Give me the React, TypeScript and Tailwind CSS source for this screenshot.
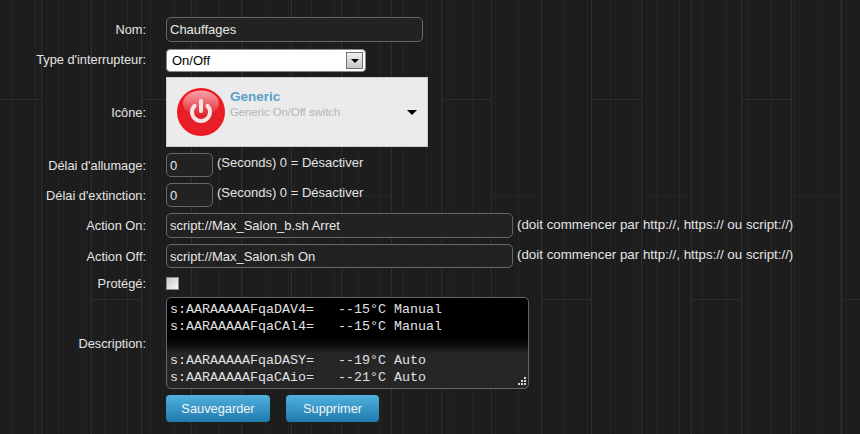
import React from "react";

const inputClass =
  "h-full bg-[#222222] border border-[#666666] rounded-[5px] px-[3px] text-[#e8e8e8] text-[13px] outline-none";

function Row({
  label,
  height,
  top,
  labelShift,
  children,
}: {
  label: string;
  height: string;
  top: string;
  labelShift: string;
  children: React.ReactNode;
}) {
  return (
    <div className={`flex items-center ${height} ${top}`}>
      <label className={`w-[146px] shrink-0 text-right text-[12.8px] text-[#e4e4e4] ${labelShift}`}>{label}</label>
      <div className="ml-[20px] flex items-center h-full">{children}</div>
    </div>
  );
}

function PowerIcon() {
  return (
    <svg width="48" height="48" viewBox="0 0 48 48" className="shrink-0">
      <defs>
        <radialGradient id="red" cx="50%" cy="50%" r="50%">
          <stop offset="0%" stopColor="#d8202a" />
          <stop offset="75%" stopColor="#e8202a" />
          <stop offset="100%" stopColor="#f0161e" />
        </radialGradient>
        <linearGradient id="shine" x1="0" y1="0" x2="0" y2="1">
          <stop offset="0%" stopColor="#ffffff" stopOpacity="0.6" />
          <stop offset="100%" stopColor="#ffffff" stopOpacity="0.03" />
        </linearGradient>
      </defs>
      <circle cx="24" cy="24" r="24" fill="url(#red)" />
      <ellipse cx="24" cy="15" rx="18" ry="12.5" fill="url(#shine)" />
      <path
        d="M17.5 17.8a9 9 0 1 0 13 0"
        fill="none"
        stroke="#f8e4e4"
        strokeWidth="4"
        strokeLinecap="round"
      />
      <path d="M24 13v10" fill="none" stroke="#f8e4e4" strokeWidth="4" strokeLinecap="round" />
    </svg>
  );
}

const hint = "(doit commencer par http://, https:// ou script://)";

export default function App() {
  return (
    <div className="w-[860px] h-[434px] overflow-hidden font-['Liberation_Sans',Arial,sans-serif] pt-[17px] [background:conic-gradient(at_50px_1px,transparent_270deg,#2b2b2b_270deg)_-9px_99px/150px_600px,conic-gradient(at_50px_1px,transparent_270deg,#262626_270deg)_41px_195px/150px_600px,conic-gradient(at_50px_1px,transparent_270deg,#2b2b2b_270deg)_91px_299px/150px_600px,linear-gradient(90deg,#2e2e2e_1px,transparent_1px)_41px_0/50px_100%,repeating-linear-gradient(90deg,transparent_0px,transparent_12px,#232323_12px,#232323_13px,transparent_13px,transparent_23px),repeating-linear-gradient(90deg,#1b1b1b_0px,#1b1b1b_1px,#202020_2px,#1d1d1d_3px,#1e1e1e_4px)]">
      {/* Nom */}
      <Row label="Nom:" height="h-[25px]" top="" labelShift="translate-y-0">
        <input readOnly value="Chauffages" className={`${inputClass} w-[257px]`} />
      </Row>

      {/* Type */}
      <Row label="Type d'interrupteur:" height="h-[23px]" top="mt-[7px]" labelShift="-translate-y-[1px]">
        <div className="w-[200px] h-full bg-white rounded-[4px] border border-[#888888] flex items-center justify-between pl-[5px] pr-[2px] text-[13px] text-black">
          <span>On/Off</span>
          <span className="w-[17px] h-[17px] bg-gradient-to-b from-[#f0f0f0] to-[#c8c8c8] border border-[#707070] flex items-center justify-center">
            <span className="w-0 h-0 border-l-[4px] border-r-[4px] border-t-[4px] border-l-transparent border-r-transparent border-t-black" />
          </span>
        </div>
      </Row>

      {/* Icône */}
      <Row label="Icône:" height="h-[70px]" top="mt-[5px]" labelShift="translate-y-[1px]">
        <div className="w-[262px] h-full bg-[#ebebeb] border border-[#cccccc] flex items-center pl-[10px] pr-[10px]">
          <PowerIcon />
          <div className="ml-[5px] flex-1 -translate-y-[8px]">
            <div className="text-[13.5px] leading-[15px] font-bold text-[#5a9fc8]">Generic</div>
            <div className="text-[11.3px] leading-[15px] text-[#b4b4b4] mt-[1px]">Generic On/Off switch</div>
          </div>
          <span className="w-0 h-0 border-l-[5px] border-r-[5px] border-t-[5px] border-l-transparent border-r-transparent border-t-black" />
        </div>
      </Row>

      {/* Délais */}
      <Row label="Délai d'allumage:" height="h-[24px]" top="mt-[6px]" labelShift="translate-y-[1px]">
        <input readOnly value="0" className={`${inputClass} w-[47px]`} />
        <span className="ml-[4px] text-[13px] text-[#e4e4e4] -translate-y-[2px]">(Seconds) 0 = Désactiver</span>
      </Row>
      <Row label="Délai d'extinction:" height="h-[24px]" top="mt-[6px]" labelShift="translate-y-[1px]">
        <input readOnly value="0" className={`${inputClass} w-[47px]`} />
        <span className="ml-[4px] text-[13px] text-[#e4e4e4] -translate-y-[2px]">(Seconds) 0 = Désactiver</span>
      </Row>

      {/* Actions */}
      <Row label="Action On:" height="h-[25px]" top="mt-[6px]" labelShift="translate-y-0">
        <input readOnly value="script://Max_Salon_b.sh Arret" className={`${inputClass} w-[347px]`} />
        <span className="ml-[4px] text-[13.33px] text-[#e4e4e4] -translate-y-[1px] whitespace-nowrap">{hint}</span>
      </Row>
      <Row label="Action Off:" height="h-[24px]" top="mt-[6px]" labelShift="translate-y-[1px]">
        <input readOnly value="script://Max_Salon.sh On" className={`${inputClass} w-[347px]`} />
        <span className="ml-[4px] text-[13.33px] text-[#e4e4e4] -translate-y-[1px] whitespace-nowrap">{hint}</span>
      </Row>

      {/* Protégé */}
      <Row label="Protégé:" height="h-[13px]" top="mt-[9px]" labelShift="translate-y-0">
        <span className="w-[13px] h-[13px] border border-[#8a8a8a] bg-gradient-to-br from-[#c8c8c8] to-[#f8f8f8]" />
      </Row>

      {/* Description */}
      <Row label="Description:" height="h-[92px]" top="mt-[7px]" labelShift="translate-y-[1px]">
        <div className="relative w-[363px] h-full rounded-[5px] border border-[#666666] bg-gradient-to-b from-[#000000] from-[38%] to-[#262626] to-[62%] pl-[3px] pt-[3px] font-['Liberation_Mono',monospace] text-[13.33px] leading-[17px] text-[#e0e0e0] whitespace-pre">
          {"s:AARAAAAAFqaDAV4=   --15°C Manual\ns:AARAAAAAFqaCAl4=   --15°C Manual\n\ns:AARAAAAAFqaDASY=   --19°C Auto\ns:AARAAAAAFqaCAio=   --21°C Auto"}
          <svg width="9" height="9" viewBox="0 0 9 9" className="absolute right-[2px] bottom-[2px]">
            <path d="M7 0h2v2H7zM4 3h2v2H4zM7 3h2v2H7zM1 6h2v2H1zM4 6h2v2H4zM7 6h2v2H7z" fill="#d8d8d8" />
          </svg>
        </div>
      </Row>

      {/* Buttons */}
      <div className="flex ml-[166px] mt-[6px] gap-[16px]">
        <button className="w-[104px] h-[27px] rounded-[4px] bg-gradient-to-b from-[#4fb3de] to-[#1f79ae] text-[12.8px] text-[#f4f4f4]">
          Sauvegarder
        </button>
        <button className="w-[93px] h-[27px] rounded-[4px] bg-gradient-to-b from-[#4fb3de] to-[#1f79ae] text-[12.8px] text-[#f4f4f4]">
          Supprimer
        </button>
      </div>
    </div>
  );
}
